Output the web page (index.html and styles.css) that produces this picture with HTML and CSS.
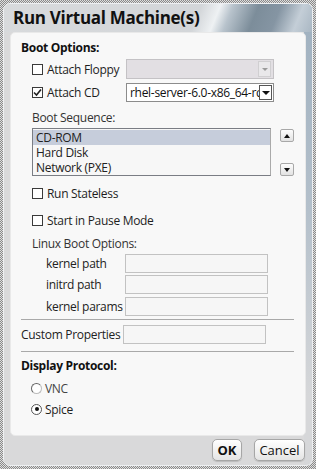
FILE: index.html
```html
<!DOCTYPE html>
<html lang="en">
<head>
  <meta charset="UTF-8">
  <meta name="viewport" content="width=device-width, initial-scale=1.0">
  <link rel="stylesheet" href="styles.css">
  <title>Run Virtual Machine(s)</title>
</head>
<body>
  <div class="frame">
    <div class="window">
      <!-- Title -->
      <div class="title">Run Virtual Machine(s)</div>

      <!-- Main Panel -->
      <div class="panel">
        <div class="section-title boot-title">Boot Options:</div>

        <div class="row floppy-row">
          <span class="check"></span>
          <span class="row-label">Attach Floppy</span>
          <div class="select disabled"><span class="value"></span><span class="arrow"></span></div>
        </div>

        <div class="row cd-row">
          <span class="check checked">
            <svg width="9" height="9" viewBox="0 0 9 9"><path d="M1 4.5 L3.5 7 L8 1.5" fill="none" stroke="#222" stroke-width="1.6"/></svg>
          </span>
          <span class="row-label">Attach CD</span>
          <div class="select"><span class="value">rhel-server-6.0-x86_64-rc</span><span class="arrow"></span></div>
        </div>

        <div class="sub-label seq-label">Boot Sequence:</div>
        <div class="seq-row">
          <div class="listbox">
            <div class="item selected">CD-ROM</div>
            <div class="item">Hard Disk</div>
            <div class="item">Network (PXE)</div>
          </div>
          <div class="move-buttons">
            <span class="move-btn"><span class="tri up"></span></span>
            <span class="move-btn"><span class="tri down"></span></span>
          </div>
        </div>

        <div class="row opt-row stateless">
          <span class="check"></span>
          <span>Run Stateless</span>
        </div>
        <div class="row opt-row pause">
          <span class="check"></span>
          <span>Start in Pause Mode</span>
        </div>

        <div class="sub-label linux-label">Linux Boot Options:</div>
        <div class="field kernel">
          <span class="field-label">kernel path</span>
          <span class="input"></span>
        </div>
        <div class="field initrd">
          <span class="field-label">initrd path</span>
          <span class="input"></span>
        </div>
        <div class="field params">
          <span class="field-label">kernel params</span>
          <span class="input"></span>
        </div>

        <div class="separator first-sep"></div>

        <div class="field custom">
          <span class="field-label">Custom Properties</span>
          <span class="input"></span>
        </div>

        <div class="separator second-sep"></div>

        <div class="section-title display-title">Display Protocol:</div>
        <div class="row radio-row vnc">
          <span class="radio"></span>
          <span>VNC</span>
        </div>
        <div class="row radio-row spice">
          <span class="radio on"></span>
          <span>Spice</span>
        </div>
      </div>

      <!-- Footer -->
      <div class="footer">
        <button class="btn ok">OK</button>
        <button class="btn cancel">Cancel</button>
      </div>
    </div>
  </div>
</body>
</html>
```

FILE: styles.css
```css
/* General Styles */
body {
  margin: 0;
  font-family: "Open Sans", Arial, sans-serif;
  font-size: 12px;
  color: #1e1e1e;
  background: #cfcfcf;
}

.frame {
  width: 316px;
  height: 469px;
  box-sizing: border-box;
  padding: 3px;
  background: repeating-conic-gradient(#8a8a8a 0 25%, #dedede 0 50%) 0 0 / 2px 2px;
}

.window {
  height: 100%;
  box-sizing: border-box;
  border: 1px solid #eef0f2;
  border-radius: 7px;
  display: flex;
  flex-direction: column;
  overflow: hidden;
  background-color: #d9d9da;
  background-image: linear-gradient(#9fb0bf, #b4c0cb 45%, #d6d7d9 85%);
  background-position: right top;
  background-size: 8px 100%;
  background-repeat: no-repeat;
}

/* Title */
.title {
  height: 28px;
  padding-left: 9px;
  font-size: 17px;
  font-weight: bold;
  line-height: 28px;
  letter-spacing: -0.3px;
  color: #111;
  background-image: linear-gradient(112deg, #d8dadc 0%, #d3d6d9 62%, #eef1f3 68%, #b8c3cc 72%, #7c8d9a 80%, #8595a3 87%, #c4ced7 94%, #a9b7c3 100%);
}

/* Panel */
.panel {
  flex: 1;
  margin: 0 6px;
  padding: 7px 11px 0 10px;
  background: #f8f8f8;
  border: 1px solid #e9e9e9;
  border-radius: 5px;
  box-sizing: border-box;
  letter-spacing: -0.3px;
}

.section-title {
  font-weight: bold;
  line-height: 16px;
  color: #111;
}

.sub-label {
  line-height: 16px;
  padding-left: 11px;
  color: #333;
}

.row {
  display: flex;
  align-items: center;
  padding-left: 11px;
}

.floppy-row {
  margin-top: 3px;
  height: 20px;
}

.cd-row {
  margin-top: 4px;
  height: 19px;
}

.row-label {
  width: 79px;
}

/* Checkbox */
.check {
  width: 9px;
  height: 9px;
  border: 1px solid #3a3a3a;
  background: #fff;
  margin-right: 4px;
  display: flex;
  align-items: center;
  justify-content: center;
  flex: none;
}

/* Select boxes */
.select {
  width: 148px;
  height: 100%;
  box-sizing: border-box;
  border: 1px solid #8c8c8c;
  background: #fff;
  display: flex;
  align-items: center;
  overflow: hidden;
}

.select .value {
  flex: 1;
  overflow: hidden;
  white-space: nowrap;
  padding-left: 3px;
  color: #111;
}

.select .arrow {
  width: 11px;
  height: 13px;
  margin-right: 1px;
  border: 1px solid #555;
  background: #fff;
  display: flex;
  align-items: center;
  justify-content: center;
  flex: none;
}

.select .arrow::after {
  content: "";
  border-left: 4px solid transparent;
  border-right: 4px solid transparent;
  border-top: 4px solid #111;
}

.select.disabled {
  background: #e2dfe3;
  border-color: #c4c2c5;
}

.select.disabled .arrow {
  border-color: #d0cfd1;
  background: #e9e8ea;
  height: 14px;
  margin-right: 2px;
}

.select.disabled .arrow::after {
  border-top-color: #9a9a9a;
  border-left-width: 3px;
  border-right-width: 3px;
  border-top-width: 3px;
}

/* Boot sequence */
.seq-label {
  margin-top: 8px;
}

.seq-row {
  display: flex;
  margin-top: 2px;
  padding-left: 11px;
}

.listbox {
  width: 243px;
  height: 48px;
  box-sizing: border-box;
  border: 1px solid #7a7d84;
  border-right-color: #aaa;
  background: #f7f7f7;
  padding-top: 1px;
}

.item {
  height: 15px;
  line-height: 15px;
  padding-left: 3px;
  color: #222;
}

.item.selected {
  background: #c6cddb;
}

.move-buttons {
  display: flex;
  flex-direction: column;
  justify-content: space-between;
  margin-left: 9px;
  padding-top: 1px;
}

.move-btn {
  width: 12px;
  height: 11px;
  border: 1px solid #a8a8a8;
  border-radius: 2px;
  background: linear-gradient(#fdfdfd, #e2e2e2);
  display: flex;
  align-items: center;
  justify-content: center;
}

.tri {
  border-left: 3.5px solid transparent;
  border-right: 3.5px solid transparent;
}

.tri.up {
  border-bottom: 4px solid #111;
}

.tri.down {
  border-top: 4px solid #111;
}

/* Options */
.opt-row {
  height: 16px;
}

.stateless {
  margin-top: 9px;
}

.pause {
  margin-top: 11px;
}

.linux-label {
  margin-top: 8px;
}

/* Text fields */
.field {
  display: flex;
  align-items: center;
  height: 19px;
}

.field-label {
  width: 79px;
  padding-left: 25px;
  color: #222;
}

.input {
  width: 143px;
  height: 19px;
  box-sizing: border-box;
  border: 1px solid #c2c2c2;
  background: #f6f6f6;
}

.kernel {
  margin-top: 2px;
}

.initrd {
  margin-top: 2px;
}

.params {
  margin-top: 3px;
}

.custom {
  margin-top: 5px;
}

.custom .field-label {
  width: 102px;
  padding-left: 0;
}

.separator {
  height: 1px;
  background: #a9a9a9;
}

.first-sep {
  margin-top: 3px;
}

.second-sep {
  margin-top: 7px;
}

.display-title {
  margin-top: 6px;
}

/* Radios */
.radio-row {
  height: 16px;
  padding-left: 10px;
}

.vnc {
  margin-top: 6px;
  color: #444;
}

.spice {
  margin-top: 5px;
}

.radio {
  width: 9px;
  height: 9px;
  border: 1px solid #555;
  border-radius: 50%;
  background: #fff;
  margin-right: 3px;
  display: flex;
  align-items: center;
  justify-content: center;
}

.vnc .radio {
  border-color: #666 #bbb #bbb #666;
}

.radio.on::after {
  content: "";
  width: 4px;
  height: 4px;
  border-radius: 50%;
  background: #111;
}

/* Footer */
.footer {
  height: 29px;
  box-sizing: border-box;
  padding: 3px 7px 0 0;
  display: flex;
  justify-content: flex-end;
  align-items: flex-start;
  gap: 12px;
}

.btn {
  height: 22px;
  padding: 0;
  font-family: "Open Sans", Arial, sans-serif;
  font-size: 13px;
  color: #111;
  border: 1px solid #a6a6a6;
  border-radius: 5px;
  background: linear-gradient(#ffffff, #e4e4e4);
  box-shadow: 0 1px 1px rgba(0, 0, 0, 0.15);
}

.btn.ok {
  width: 30px;
  font-weight: bold;
}

.btn.cancel {
  width: 51px;
}
```
